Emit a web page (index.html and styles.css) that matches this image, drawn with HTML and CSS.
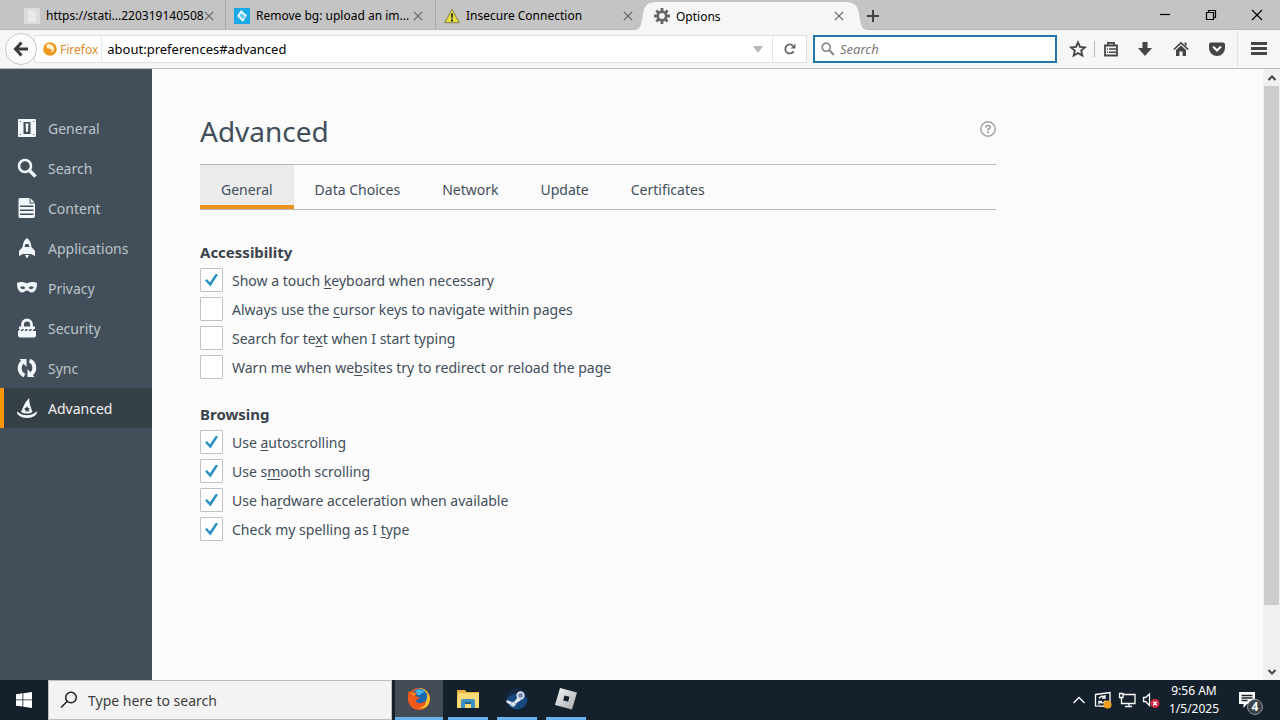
FILE: index.html
```html
<!DOCTYPE html>
<html lang="en">
<head>
<meta charset="utf-8">
<title>Options</title>
<link rel="stylesheet" href="styles.css">
</head>
<body>
<div class="tabstrip">
  <div class="tabs">
    <div class="tab">
      <svg class="icon16" viewBox="0 0 16 16"><rect width="16" height="16" rx="1" fill="#dcdcdc"/><path d="M4 2h5l3 3v9H4z" fill="#e8e8e8"/></svg>
      <span class="tab-title">https://stati...220319140508</span>
      <button class="tab-close" aria-label="Close tab"><svg viewBox="0 0 12 12"><path d="M1 1l10 10M11 1L1 11"/></svg></button>
    </div>
    <div class="tab">
      <svg class="icon16" viewBox="0 0 16 16"><rect width="16" height="16" fill="#18a9e6"/><path d="M7 2l6 5-4 7-6-6z" fill="#e4f6fd"/><path d="M6 6l3 0 2 3-2 2-3-3z" fill="#5cc8f2"/><path d="M4 10l3 3M9 3l3 3" stroke="#18a9e6" stroke-width="1"/></svg>
      <span class="tab-title">Remove bg: upload an im...</span>
      <button class="tab-close" aria-label="Close tab"><svg viewBox="0 0 12 12"><path d="M1 1l10 10M11 1L1 11"/></svg></button>
    </div>
    <div class="tab">
      <svg class="icon16" viewBox="0 0 16 16"><path d="M8 1.2L15.3 14.6H.7z" fill="#e9df3c" stroke="#96925c" stroke-width="1.2" stroke-linejoin="round"/><path d="M7 5.5h2l-.4 5H7.4zM7 11.5h2v2H7z" fill="#222"/></svg>
      <span class="tab-title">Insecure Connection</span>
      <button class="tab-close" aria-label="Close tab"><svg viewBox="0 0 12 12"><path d="M1 1l10 10M11 1L1 11"/></svg></button>
    </div>
    <div class="tab tab-active">
      <svg class="tab-edge tab-edge-left" viewBox="0 0 24 28"><path d="M0 28C9 28 7 17 10 8 12 2 15 0 24 0V28z"/></svg>
      <svg class="tab-edge tab-edge-right" viewBox="0 0 24 28"><path d="M24 28C15 28 17 17 14 8 12 2 9 0 0 0V28z"/></svg>
      <svg class="icon16" viewBox="0 0 16 16"><circle cx="8" cy="8" r="4.2" fill="none" stroke="#666" stroke-width="2.6"/><path d="M8 0v3M8 13v3M0 8h3M13 8h3M2.4 2.4l2 2M11.6 11.6l2 2M2.4 13.6l2-2M11.6 4.4l2-2" stroke="#666" stroke-width="2.8"/></svg>
      <span class="tab-title">Options</span>
      <button class="tab-close" aria-label="Close tab"><svg viewBox="0 0 12 12"><path d="M1 1l10 10M11 1L1 11"/></svg></button>
    </div>
    <button class="tab-new" aria-label="New tab"><svg viewBox="0 0 12 12"><path d="M6 0v12M0 6h12"/></svg></button>
  </div>
  <div class="window-buttons">
    <button aria-label="Minimize"><svg viewBox="0 0 12 12"><path d="M1 5.5h10"/></svg></button>
    <button aria-label="Restore"><svg viewBox="0 0 12 12"><path d="M1.5 3.5h7v7h-7zM3.5 3.500v-2h7v7h-2"/></svg></button>
    <button aria-label="Close"><svg viewBox="0 0 12 12"><path d="M1 1l10 10M11 1L1 11"/></svg></button>
  </div>
</div>

<div class="navbar">
  <button class="back" aria-label="Back"><svg viewBox="0 0 16 16"><path d="M8.500 1.500L2.500 8l6 6.500M3 8h12" fill="none" stroke="#3c3c3c" stroke-width="3"/></svg></button>
  <div class="urlbar">
    <div class="identity">
      <svg class="identity-icon" viewBox="0 0 14 14"><circle cx="7" cy="7" r="6.800" fill="#ee9a1e"/><path d="M4 2.500c3-1 7 .5 7 4.500 0 2.500-2 3.500-4 3.500 2-1 2-2.500 1-3.500L5 6.500C3.500 5.500 3 4 4 2.500z" fill="#fff3d4"/></svg>
      <span>Firefox</span>
    </div>
    <input class="url-input" type="text" aria-label="Address" value="about:preferences#advanced">
    <button class="url-drop" aria-label="History"><svg viewBox="0 0 10 8"><path d="M0 1h10L5 8z" fill="#b9b9b9"/></svg></button>
    <button class="reload" aria-label="Reload"><svg viewBox="0 0 12 12"><path d="M9.700 8.200A4.500 4.500 0 1 1 9 2.800" fill="none" stroke="#666" stroke-width="1.800"/><path d="M11.500.5v5h-5z" fill="#666"/></svg></button>
  </div>
  <label class="searchbar">
    <svg viewBox="0 0 14 14"><circle cx="5.200" cy="5.200" r="4" fill="none" stroke="#8a8a8a" stroke-width="1.700"/><path d="M8.300 8.300l4.700 4.700" stroke="#8a8a8a" stroke-width="2.200"/></svg>
    <input type="text" placeholder="Search" aria-label="Search">
  </label>
  <div class="tools">
    <button aria-label="Bookmark this page"><svg viewBox="0 0 16 16"><path d="M8 1.400l2 4.500 4.900.5-3.700 3.200 1.100 4.900L8 12l-4.300 2.500 1.100-4.900L1.100 6.400 6 5.900z" fill="none" stroke="#454545" stroke-width="1.900"/></svg></button>
    <button class="tool-divided" aria-label="Bookmarks"><svg viewBox="0 0 16 16"><path d="M2 4.500h12v10H2z" fill="none" stroke="#454545" stroke-width="1.800"/><path d="M5 4.500V1.800h6v2.700" fill="none" stroke="#454545" stroke-width="1.800"/><path d="M4 8h1M6 8h7M4 11.300h1M6 11.300h7" stroke="#454545" stroke-width="1.400"/></svg></button>
    <button aria-label="Downloads"><svg viewBox="0 0 16 16"><path d="M5.500 1h5v6H15l-7 8-7-8h4.500z" fill="#454545"/></svg></button>
    <button aria-label="Home"><svg viewBox="0 0 16 16"><path d="M.8 8.500L8 1.800l7.200 6.700" fill="none" stroke="#454545" stroke-width="1.700"/><path d="M11.500 1.500h2v4l-2-2zM3 9l5-4.500L13 9v6H9.600v-4.500H6.400V15H3z" fill="#454545"/></svg></button>
    <button aria-label="Pocket"><svg viewBox="0 0 16 16"><path d="M2 1.500h12q2 0 2 2V7A8 8 0 0 1 0 7V3.500q0-2 2-2z" fill="#454545"/><path d="M4 5.500l4 4 4-4" fill="none" stroke="#fff" stroke-width="2"/></svg></button>
    <button class="menu" aria-label="Menu"><svg viewBox="0 0 16 16"><path d="M0 2.500h16M0 7.500h16M0 12.500h16" stroke="#454545" stroke-width="2.800"/></svg></button>
  </div>
</div>

<div class="page">
  <nav class="categories">
    <a href="#general"><svg viewBox="0 0 20 20"><path fill-rule="evenodd" d="M2 1h16q1 0 1 1v16q0 1-1 1H2q-1 0-1-1V2q0-1 1-1zM6.500 4v12h7V4zM3 3v1h1V3zm13 0v1h1V3zM3 16v1h1v-1zm13 0v1h1v-1z"/><path d="M8.500 5.500h3l-.6 8.500H9.100z"/></svg>General</a>
    <a href="#search"><svg viewBox="0 0 20 20"><circle cx="8" cy="8" r="6" fill="none" stroke="currentColor" stroke-width="2.600"/><path d="M12 12l6.500 6.500" stroke="currentColor" stroke-width="3.400"/></svg>Search</a>
    <a href="#content"><svg viewBox="0 0 20 20"><path fill-rule="evenodd" d="M3 0h9.500v5.500H18V18q0 2-2 2H3q-1.500 0-1.500-1.500v-17Q1.500 0 3 0zm0 7.500V9h13.500V7.500zm0 4V13h13.500v-1.500zm0 4V17h13.500v-1.500z"/><path d="M13.500.3L17.700 4.500h-4.200z"/></svg>Content</a>
    <a href="#applications"><svg viewBox="0 0 20 20"><path fill-rule="evenodd" d="M10 0c3 2 4 5 4.500 9L18 13v5l-4-2H6l-4 2v-5l3.500-4C6 5 7 2 10 0zM8.500 6l-1 3h5l-1-3z"/><path d="M8 17h4l-2 3.500z"/></svg>Applications</a>
    <a href="#privacy"><svg viewBox="0 0 20 20"><path fill-rule="evenodd" d="M0 5c3-1.500 7-1 10 .5C13 4 17 3.500 20 5c0 5-1.500 9-5 9.500-2.500 0-3.500-2-5-2s-2.500 2-5 2C1.500 14 0 10 0 5zm3 4.500q3 3 5.500.5Q6 7 3 9.500zm8.500.5q2.500 2.500 5.500-.5-3-2.500-5.500.5z"/></svg>Privacy</a>
    <a href="#security"><svg viewBox="0 0 20 20"><path d="M5.500 9V6.500a4.500 4.500 0 0 1 9 0V9" fill="none" stroke="currentColor" stroke-width="2.800"/><path d="M2 8.500h16V11H2zM1 13h18v4.500q0 2-2 2H3q-2 0-2-2z"/><path d="M2 13.500l2.500-3M6 13.500l2.500-3M10 13.500l2.500-3M14 13.500l2.500-3" stroke="currentColor" stroke-width="1.500"/></svg>Security</a>
    <a href="#sync"><svg viewBox="0 0 20 20"><path d="M7.500 17.500C2 15.500 1 8 5.500 4M12.500 2.500C18 4.500 19 12 14.500 16" fill="none" stroke="currentColor" stroke-width="3.800"/><path d="M2.500 1H9.500v8zM17.500 19h-7v-8z"/></svg>Sync</a>
    <a href="#advanced" class="selected" aria-current="page"><svg viewBox="0 0 20 20"><path fill-rule="evenodd" d="M4 14C6 11 7 4 12.500 0 11.500 4 14 9 15.500 14c-3 2-8 2-11.500 0zm6-6l-1 2-2 .4 1.500 1.400-.3 2L10 13l2 .8-.4-2L13 10.400l-2-.4z"/><path d="M0 13.500q1 0 2.200 1.500c4.500 3 11 3 15.500 0q1.300-1.500 2.300-1.500c.5 3-4 6.500-10 6.500S-.5 16.500 0 13.500z"/></svg>Advanced</a>
  </nav>
  <main class="content">
    <div class="pane">
      <header class="pane-header">
        <h1>Advanced</h1>
        <button class="help" aria-label="Help"><svg viewBox="0 0 16 16"><circle cx="8" cy="8" r="7.200" fill="none" stroke="#a3a3a3" stroke-width="1.500"/><path d="M5.800 6.500q0-2 2.200-2t2.200 1.700Q10.200 7.400 8 8.500V9.500" fill="none" stroke="#999" stroke-width="1.600"/><path d="M7.100 10.500h1.800v1.800H7.100z" fill="#999"/></svg></button>
      </header>
      <div class="subtabs" role="tablist">
        <button class="subtab current" role="tab" aria-selected="true">General</button>
        <button class="subtab" role="tab">Data Choices</button>
        <button class="subtab" role="tab">Network</button>
        <button class="subtab" role="tab">Update</button>
        <button class="subtab" role="tab">Certificates</button>
      </div>
      <section class="group">
        <h2>Accessibility</h2>
        <label class="option"><input type="checkbox" checked><span>Show a touch <u>k</u>eyboard when necessary</span></label>
        <label class="option"><input type="checkbox"><span>Always use the <u>c</u>ursor keys to navigate within pages</span></label>
        <label class="option"><input type="checkbox"><span>Search for te<u>x</u>t when I start typing</span></label>
        <label class="option"><input type="checkbox"><span>Warn me when we<u>b</u>sites try to redirect or reload the page</span></label>
      </section>
      <section class="group">
        <h2>Browsing</h2>
        <label class="option"><input type="checkbox" checked><span>Use <u>a</u>utoscrolling</span></label>
        <label class="option"><input type="checkbox" checked><span>Use s<u>m</u>ooth scrolling</span></label>
        <label class="option"><input type="checkbox" checked><span>Use ha<u>r</u>dware acceleration when available</span></label>
        <label class="option"><input type="checkbox" checked><span>Check my spelling as I <u>t</u>ype</span></label>
      </section>
    </div>
  </main>
  <div class="scrollbar">
    <button aria-label="Scroll up"><svg viewBox="0 0 10 10"><path d="M1.500 7L5 3.500 8.500 7"/></svg></button>
    <div class="track"><div class="thumb"></div></div>
    <button aria-label="Scroll down"><svg viewBox="0 0 10 10"><path d="M1.500 3L5 6.500 8.500 3"/></svg></button>
  </div>
</div>

<footer class="taskbar">
  <button class="start" aria-label="Start"><svg viewBox="0 0 16 16"><path d="M0 2.200L6.500 1.300V7.500H0zM7.300 1.200L16 0v7.500H7.300zM0 8.300h6.500v6.300L0 13.700zM7.300 8.300H16V16l-8.700-1.300z" fill="#fff"/></svg></button>
  <label class="task-search">
    <svg viewBox="0 0 18 18"><circle cx="11" cy="6.500" r="5.300" fill="none" stroke="#222" stroke-width="1.500"/><path d="M7.300 10.300L1 16.500" stroke="#222" stroke-width="1.500"/></svg>
    <input type="text" placeholder="Type here to search" aria-label="Type here to search">
  </label>
  <div class="apps">
    <button class="app app-active" aria-label="Firefox"><svg viewBox="0 0 24 24"><circle cx="12" cy="12" r="11" fill="#ef5a1c"/><path d="M12 1a11 11 0 0 1 9 17c-2 3-6 4-9 3 6-1 8-5 7-10-1-4-4-6-7-10z" fill="#fcc62c"/><circle cx="12.500" cy="9.500" r="7.800" fill="#1b67b0"/><path d="M8 3.500c3-2 8-1 10 1-3 1-3 3-7 4z" fill="#43b4e8"/><path d="M2 4l3 2c2-1 4-1 5 0L8.500 9l4 1.500c-.5 2-3 2-4 3 1 3 5 4 9 1-1 6-8 8-12 5C0 16 0 8 2 4z" fill="#ef5a1c"/><path d="M2 4l3 2 4 .5L7 9z" fill="#f99b2a"/></svg></button>
    <button class="app" aria-label="File Explorer"><svg viewBox="0 0 24 24"><path d="M1 3h8l1.500 2H23v16H1z" fill="#e9b33c"/><path d="M2 6h21v15H1z" fill="#fddc78"/><path d="M5 21v-7q0-2 2-2h10q2 0 2 2v7h-4v-4H9v4z" fill="#3d92c4"/><path d="M9 17h6v-2H9z" fill="#285f85"/></svg></button>
    <button class="app" aria-label="Steam"><svg viewBox="0 0 24 24"><circle cx="12" cy="12" r="10.500" fill="#17497f"/><path d="M1.500 12A10.500 10.500 0 0 1 22.500 12C18 5 6 5 1.500 12z" fill="#172642"/><path d="M1.500 13l7 2.500L13 10l3 3-5 3.500c0 4-5 4-6 1l-3.500-2z" fill="#e5eaf1"/><circle cx="15.500" cy="8.500" r="3.300" fill="#6f8cab" stroke="#dce5ee" stroke-width="1.700"/><circle cx="8" cy="17" r="2" fill="none" stroke="#a9bacd"/></svg></button>
    <button class="app" aria-label="Roblox"><svg viewBox="0 0 24 24"><defs><linearGradient id="silver" x1="0" y1="0" x2="1" y2="1"><stop stop-color="#f5f5f5"/><stop offset="1" stop-color="#a5aaae"/></linearGradient></defs><path fill="url(#silver)" fill-rule="evenodd" d="M6 1l17 4.500-5 17-17-4.500zM10.500 8.500l-1.300 5 5 1.300 1.300-5z"/></svg></button>
  </div>
  <div class="tray">
    <button aria-label="Show hidden icons"><svg class="tray-chevron" viewBox="0 0 14 16"><path d="M1.500 11L7 5.500 12.500 11"/></svg></button>
    <button aria-label="Windows Update"><svg viewBox="0 0 18 18"><path d="M1.500 3.500L16 1.500v14l-14.500-.6z"/><path d="M5 7.500Q8 3.500 11 6.500M11 4v3H8M11.500 9.500Q9 13.500 5.500 11M5 13.500v-3h3"/><circle cx="13.500" cy="13.500" r="4" fill="#f0a020" stroke="none"/></svg></button>
    <button aria-label="Network"><svg viewBox="0 0 18 18"><path d="M5 3.500h12v9H3.500V8M11 12.500v3M7 15.500h7M1.500 2.500H5v4H1.500zM3.300 6.500V8"/></svg></button>
    <button aria-label="Volume muted"><svg viewBox="0 0 18 18"><path d="M1.500 6.500h2L7.500 3v11.500l-4-4h-2z"/><circle cx="13" cy="12.500" r="4.500" fill="#d72e42" stroke="none"/><path d="M11.300 10.800l3.400 3.400M14.700 10.800l-3.400 3.400"/></svg></button>
    <button class="clock"><span>9:56 AM</span><span>1/5/2025</span></button>
    <button class="notifications" aria-label="Notifications"><svg viewBox="0 0 18 18"><path d="M1 1h16v12H9l-3.500 4v-4H1z" fill="#fff" stroke="none"/><path d="M3.500 4.500h11M3.500 7h11M3.500 9.500h6" stroke="#18222d"/></svg><span class="badge">4</span></button>
  </div>
</footer>
</body>
</html>
```
FILE: styles.css
```css
* { box-sizing: border-box; }

body {
  margin: 0;
  min-height: 100vh;
  display: flex;
  flex-direction: column;
  font-family: "Noto Sans", "Open Sans", sans-serif;
  font-size: 12px;
  color: #000;
  background: #fbfbfb;
}

button {
  display: flex;
  align-items: center;
  justify-content: center;
  margin: 0;
  padding: 0;
  border: 0;
  background: none;
  font: inherit;
  color: inherit;
}

input {
  min-width: 0;
  margin: 0;
  padding: 0;
  border: 0;
  outline: 0;
  background: none;
  font: inherit;
  color: inherit;
}

svg { display: block; flex: none; overflow: visible; }

/* Tab strip */
.tabstrip {
  display: flex;
  justify-content: space-between;
  height: 30px;
  background: #c4c4c4;
  border-bottom: 1px solid #b8b8b8;
}

.tabs { display: flex; padding-left: 16px; }

.tab {
  position: relative;
  display: flex;
  align-items: center;
  justify-content: space-between;
  width: 210px;
  padding: 2px 12px 0 8px;
  border-right: 1px solid #a9a9a9;
}

.tab:nth-child(3) { border-color: transparent; }

.icon16 { width: 16px; height: 16px; z-index: 1; }

.tab-title {
  margin: 0 auto 0 6px;
  white-space: nowrap;
  z-index: 1;
}

.tab-close { width: 10px; height: 10px; z-index: 1; }
.tab-close svg { width: 10px; height: 10px; stroke: #666; stroke-width: 1.5; }

.tab-active {
  height: 28px;
  margin-top: 2px;
  padding-top: 0;
  border: 0;
  background: linear-gradient(#f6f6f6, #f6f6f6) 10px 0 / 190px 28px no-repeat;
}

.tab-edge {
  position: absolute;
  top: 0;
  width: 24px;
  height: 28px;
  fill: #f6f6f6;
}

.tab-edge-left { left: -12px; }
.tab-edge-right { right: -12px; }

.tab-new { width: 32px; padding-top: 2px; z-index: 1; margin-left: 1px; }
.tab-new svg { width: 12px; height: 12px; stroke: #444; stroke-width: 2; }

.window-buttons { display: flex; }
.window-buttons button { width: 46px; }
.window-buttons svg { width: 12px; height: 12px; fill: none; stroke: #000; stroke-width: 1.2; }

/* Navigation bar */
.navbar {
  display: flex;
  align-items: center;
  height: 39px;
  padding-left: 5px;
  background: #f6f6f6;
  border-bottom: 1px solid #b9b9b9;
}

.back {
  width: 32px;
  height: 32px;
  border: 1px solid #c8c8c8;
  border-radius: 50%;
  background: #fbfbfb;
  z-index: 1;
}

.back svg { width: 16px; height: 16px; }

.urlbar {
  flex: 1;
  display: flex;
  align-items: center;
  height: 28px;
  margin: 0 6px 0 -3px;
  border: 1px solid #e0e0e0;
  background: #fff;
}

.identity {
  display: flex;
  align-items: center;
  gap: 3px;
  height: 26px;
  margin-left: 8px;
  padding-right: 3px;
  border-right: 1px solid #e6e6e6;
  color: #e08a2c;
}

.identity-icon { width: 14px; height: 14px; }

.url-input { flex: 1; padding-left: 5px; font-size: 13px; }

.url-drop { width: 28px; height: 26px; }
.url-drop svg { width: 10px; height: 8px; }

.reload { width: 34px; height: 26px; border-left: 1px solid #e6e6e6; }
.reload svg { width: 12px; height: 12px; }

.searchbar {
  display: flex;
  align-items: center;
  gap: 5px;
  width: 244px;
  height: 28px;
  padding: 0 6px;
  border: 2px solid #2376a8;
  background: #fff;
  font-size: 13px;
}

.searchbar svg { width: 14px; height: 14px; }
.searchbar input { flex: 1; }
.searchbar input::placeholder { color: #777; font-style: italic; }

.tools { display: flex; align-items: center; padding-left: 5px; }
.tools button { width: 36px; height: 36px; }
.tools button:first-child { width: 32px; }
.tools svg { width: 16px; height: 16px; }

.tools .tool-divided {
  position: relative;
  width: 33px;
}

.tool-divided::before {
  content: "";
  position: absolute;
  left: 0;
  height: 16px;
  border-left: 1px solid #bcbcbc;
}

.tools .menu { width: 43px; margin-left: 2px; border-left: 1px solid #e2e2e2; }

/* Preferences page */
.page { flex: 1; display: flex; }

.categories {
  width: 152px;
  padding-top: 39px;
  background: #424f5a;
}

.categories a {
  display: flex;
  align-items: center;
  gap: 11px;
  height: 40px;
  padding-left: 13px;
  border-left: 4px solid transparent;
  font-size: 14px;
  color: #bcc4c9;
  text-decoration: none;
}

.categories svg { width: 20px; height: 20px; fill: currentColor; color: #f2f7fb; }

.categories .selected {
  border-color: #ff9500;
  background: #353f46;
  color: #f2f2f2;
}

.content { flex: 1; padding: 39px 48px; color: #424e5a; }
.pane { max-width: 796px; }

.pane-header {
  display: flex;
  align-items: center;
  justify-content: space-between;
  height: 56px;
  padding-bottom: 14px;
}

h1 { margin: 4px 0 0; font-size: 28px; font-weight: 400; line-height: 40px; }

.help svg { width: 16px; height: 16px; }

.subtabs {
  display: flex;
  height: 46px;
  border-top: 1px solid #b9b9b9;
  border-bottom: 1px solid #b9b9b9;
}

.subtab {
  padding: 4px 21px 0;
  font-size: 14px;
  color: #424e5a;
}

.subtab.current { background: #ebebeb; border-bottom: 4px solid #f0921e; padding-top: 8px; }

.group { margin-top: 31px; }
.group + .group { margin-top: 24px; }

h2 { margin: 0 0 5px; font-size: 15px; font-weight: 700; line-height: 22px; color: #3a434c; }

.option {
  display: flex;
  align-items: center;
  gap: 9px;
  height: 24px;
  margin-bottom: 5px;
  font-size: 14px;
}

.option input {
  appearance: none;
  display: grid;
  place-items: center;
  width: 23px;
  height: 24px;
  border: 1px solid #c1c1c1;
  border-radius: 1px;
  background: #fff;
}

.option input:checked::before {
  content: "";
  width: 13px;
  height: 13px;
  background: #2b93c4;
  clip-path: polygon(0 54%, 14% 42%, 38% 68%, 84% 0, 100% 10%, 42% 100%);
}

.option u { text-underline-offset: 2px; text-decoration-thickness: 1px; }

/* Scroll bar */
.scrollbar {
  display: flex;
  flex-direction: column;
  width: 17px;
  background: #f0f0f0;
}

.scrollbar button { height: 17px; }
.scrollbar svg { width: 10px; height: 10px; fill: none; stroke: #444; stroke-width: 2; }
.track { flex: 1; }
.thumb { height: 90%; margin: 0 1px; background: #cdcdcd; }

/* Taskbar */
.taskbar {
  display: flex;
  height: 40px;
  background: #14202b;
  color: #fff;
}

.start { width: 48px; }
.start svg { width: 16px; height: 16px; }

.task-search {
  display: flex;
  align-items: center;
  gap: 10px;
  width: 344px;
  padding-left: 11px;
  border: 1px solid #bdbdbd;
  background: #f3f3f3;
  color: #333;
  font-size: 14px;
}

.task-search svg { width: 18px; height: 18px; }
.task-search input { flex: 1; }
.task-search input::placeholder { color: #3c3c3c; }

.apps { display: flex; gap: 9px; padding-left: 3px; }
.app { width: 40px; border-bottom: 3px solid #6ab0ec; }
.app svg { width: 24px; height: 24px; }
.app-active { width: 48px; background: #434b55; margin-right: -4px; }

.tray { display: flex; align-items: center; margin-left: auto; padding-right: 17px; }
.tray button { height: 40px; }
.tray svg { width: 18px; height: 18px; fill: none; stroke: #fff; stroke-width: 1.3; }
.tray > button { width: 24px; }
.tray .tray-chevron { width: 14px; height: 16px; }

.tray .clock {
  flex-direction: column;
  width: 62px;
  line-height: 18px;
}

.tray .notifications { position: relative; width: 32px; margin-left: 6px; }

.badge {
  position: absolute;
  right: 0;
  bottom: 5px;
  width: 16px;
  height: 16px;
  border: 1px solid #8b9096;
  border-radius: 50%;
  background: #3b4148;
  font-size: 12px;
  font-weight: 700;
  line-height: 14px;
  text-align: center;
}
```
